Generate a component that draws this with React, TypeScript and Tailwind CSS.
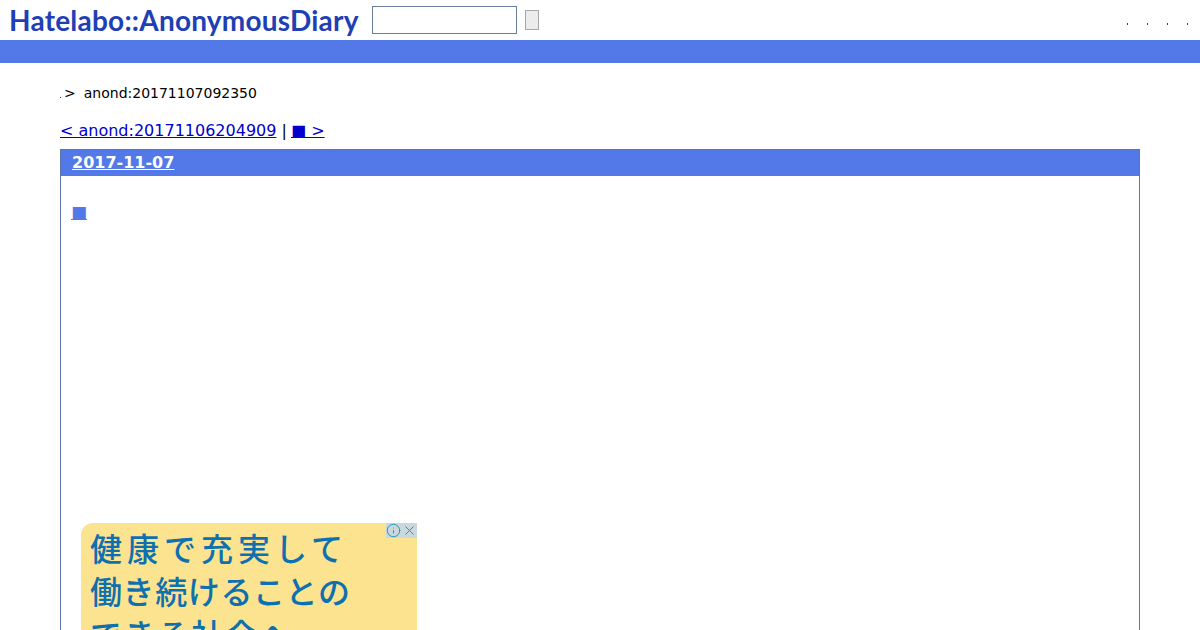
import { Info, X } from 'lucide-react';

const DOTS = [0, 1, 2, 3];

export default function App() {
  return (
    <div className="h-[630px] overflow-hidden bg-white font-['DejaVu_Sans',sans-serif] text-black">
      {/* header */}
      <div className="flex h-10 items-center pl-[9px] pr-[12px]">
        <span className="w-[349px] whitespace-nowrap font-['Lato',sans-serif] text-[28px] font-bold leading-10 tracking-[0.22px] text-[#1f3fb4]">
          Hatelabo::AnonymousDiary
        </span>
        <div className="ml-[14px] h-7 w-[145px] border border-[#6b7f9c] bg-white" />
        <div className="ml-2 h-5 w-[14px] border border-[#a8a8a8] bg-[#ececec]" />
        <div className="ml-auto flex gap-[19px] pt-2">
          {DOTS.map((d) => (
            <span key={d} className="block h-[2px] w-px bg-[#444]" />
          ))}
        </div>
      </div>
      <div className="h-[23px] bg-[#5279e7]" />

      <div className="px-[60px]">
        {/* breadcrumb */}
        <div className="mt-5 flex h-[20px] items-center text-sm leading-5">
          <span className="mt-2 block h-px w-px bg-[#444]" />
          <span className="ml-[3px]">&gt;</span>
          <span className="ml-[8px]">anond:20171107092350</span>
        </div>

        {/* prev / next */}
        <div className="mt-[18px] h-[19px] whitespace-nowrap text-base leading-[19px]">
          <a className="text-[#0000cc] underline" href="#">&lt; anond:20171106204909</a>
          {' | '}
          <a className="-ml-px text-[#0000cc] underline" href="#">■ &gt;</a>
        </div>

        {/* day */}
        <div className="mt-[9px] h-[600px] border border-[#5f77a8]">
          <div className="flex h-[26px] items-center bg-[#5279e7] pl-[11px] text-base font-bold text-white">
            <a className="underline" href="#">2017-11-07</a>
          </div>
          <div className="mt-[27px] pl-[10px] text-[17px] leading-[19px]">
            <a className="text-[#5279e7] underline" href="#">■</a>
          </div>

          {/* ad */}
          <div className="relative ml-5 mt-[301px] h-[200px] w-[336px] rounded-tl-xl bg-[#fce38f] pl-[9px] pt-[3px] font-['Noto_Sans_CJK_JP',sans-serif] text-[32px] font-medium leading-[43px] text-[#0f70b0]">
            <div className="tracking-[5px]">健康で充実して</div>
            <div className="tracking-[0.6px]">働き続けることの</div>
            <div className="tracking-[2px]">できる社会へ</div>
            <div className="absolute right-0 top-0 flex h-[15px] w-[31px] items-center justify-between bg-[#c9d8dc] text-[#1b8fc4]">
              <Info size={15} strokeWidth={1.5} />
              <X size={15} strokeWidth={1.5} />
            </div>
          </div>
        </div>
      </div>
    </div>
  );
}
